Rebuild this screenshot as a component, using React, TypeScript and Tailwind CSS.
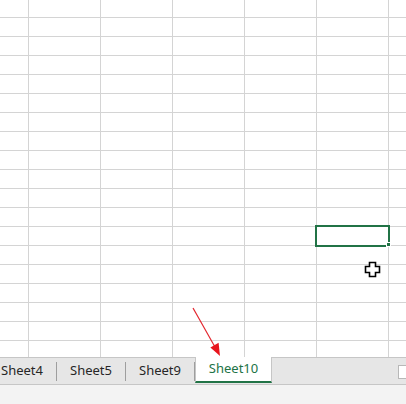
const rows = Array.from({ length: 19 }, (_, i) => i);
const cols = [72, 72, 72, 72, 72];

const tabs = ["Sheet4", "Sheet5", "Sheet9"];

function Cursor() {
  return (
    <svg width="17" height="17" viewBox="0 0 17 17" className="absolute left-[364px] top-[261px]">
      <path
        d="M5.5 1.5h6v4h4v6h-4v4h-6v-4h-4v-6h4z"
        fill="#fff"
        stroke="#000"
        strokeWidth="1.6"
        strokeLinejoin="miter"
      />
    </svg>
  );
}

function Arrow() {
  return (
    <svg width="406" height="404" className="absolute left-0 top-0 pointer-events-none">
      <line x1="193" y1="308" x2="215" y2="347" stroke="#e3262e" strokeWidth="1.2" />
      <polygon points="220,356 218.6,342.8 210.4,347.6" fill="#e8141c" />
    </svg>
  );
}

export default function App() {
  return (
    <div
      className="relative w-[406px] h-[404px] overflow-hidden bg-white"
      style={{ fontFamily: '"Noto Sans", "Open Sans", sans-serif' }}
    >
      {/* Cell grid */}
      <div className="h-[357px] overflow-hidden">
        {rows.map((r) => (
          <div
            key={r}
            className={`flex border-b border-[#d4d4d4] ${r === 0 ? "h-[18px]" : "h-[19px]"}`}
          >
            <div className="w-[29px] shrink-0 border-r border-[#d4d4d4]" />
            {cols.map((w, c) => (
              <div key={c} className="w-[72px] shrink-0 border-r border-[#d4d4d4]" />
            ))}
            <div className="flex-1" />
          </div>
        ))}
      </div>

      {/* Sheet tabs */}
      <div className="relative flex h-[28px] border-t border-b border-[#c6c6c6] bg-[#e6e6e6] text-[13px] text-[#262626]">
        {tabs.map((t, i) => (
          <div key={t} className={`flex items-center ${i === 0 ? "-ml-[12px]" : ""}`}>
            <div className="flex h-full w-[68px] items-center justify-center">{t}</div>
            <div className="h-[19px] w-px bg-[#9e9e9e]" />
          </div>
        ))}
        <div className="-mt-px flex h-[26px] w-[77px] items-center justify-center border-x border-b-2 border-x-[#c6c6c6] border-b-[#217346] bg-white text-[#217346]">
          Sheet10
        </div>
        <div className="ml-auto mt-[7px] h-[14px] w-[8px] border-y border-l border-[#b8b8b8] bg-white" />
      </div>
      <div className="h-[19px] bg-[#f3f3f3]" />

      {/* Selected cell */}
      <div className="absolute left-[315px] top-[225px] h-[22px] w-[75px] border-2 border-[#217346]" />
      <div className="absolute left-[386px] top-[242px] h-[5px] w-[5px] border border-white bg-[#217346]" />

      <Cursor />
      <Arrow />
    </div>
  );
}
